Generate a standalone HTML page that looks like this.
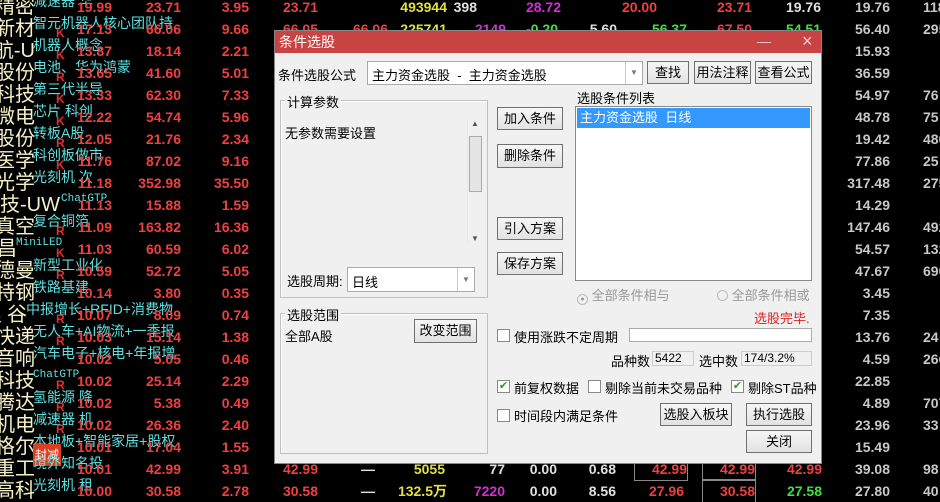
<!DOCTYPE html>
<html><head><meta charset="utf-8"><style>
*{margin:0;padding:0;box-sizing:border-box}
body{width:940px;height:497px;background:#000;position:relative;overflow:hidden;font-family:"Liberation Sans","Noto Sans CJK SC",sans-serif}
.r{position:absolute;left:0;width:940px;height:22px}
.r span{position:absolute;top:0;line-height:22px;font-size:14px;font-weight:bold;text-align:right;white-space:nowrap}
.r .nm{left:-40px;width:75px;font-size:20px;font-weight:normal;color:#f4f0c8;text-align:right}
.r .cp{left:33px;top:-6px;font-size:14px;font-weight:normal;color:#5ee0e0;text-align:left}
.r .k{left:56px;top:4px;font-size:12px;color:#e03030;text-align:left}
.c1{left:52px;width:60px;color:#f04040}
.c2{left:120px;width:61px;color:#f04040}
.c3{left:190px;width:59px;color:#f04040}
.g1{left:800px;width:90px;color:#c8c8c8}
.g2{left:923px;width:60px;color:#c8c8c8;text-align:left!important}
.x{color:#f04040}.y{color:#e0e040}.w{color:#e0e0e0}.m{color:#d030d0}.gr{color:#40e040}
.bx{outline:1px solid #888;outline-offset:0}
#dlg{position:absolute;left:274px;top:30px;width:548px;height:434px;background:#f0f0f0;border:1px solid #888;font-size:13px;color:#000}
#tb{position:absolute;left:0;top:0;width:546px;height:22px;background:#c94343;color:#fff;font-size:14px;line-height:22px;padding-left:4px}
.a{position:absolute;white-space:nowrap}
.btn{position:absolute;background:linear-gradient(#f6f6f6,#e2e2e2);border:1px solid #707070;text-align:center;font-size:13px;line-height:21px}
.inp{position:absolute;background:#fff;border:1px solid #aaa}
.grp{position:absolute;border:1px solid #c0c0c0;box-shadow:inset 1px 1px 0 #fff}
.gl{position:absolute;background:#f0f0f0;padding:0 2px;font-size:13px}
.cb{position:absolute;width:13px;height:13px;background:#fff;border:1px solid #888;font-size:11px;line-height:11px;color:#2a9a2a;text-align:center}
.dd{position:absolute;top:0;right:0;bottom:0;width:17px;border-left:1px solid #ccc;color:#777;font-size:8px;text-align:center}
</style></head><body>

<div class="r" style="top:-4px"><span class="nm">稳精密</span><span class="cp">减速器 华</span><span class="c1">19.99</span><span class="c2">23.71</span><span class="c3">3.95</span><span class="x" style="left:258px;width:60px">23.71</span><span class="y" style="left:380px;width:67px">493944</span><span class="w" style="left:440px;width:37px">398</span><span class="m" style="left:510px;width:51px">28.72</span><span class="x" style="left:600px;width:57px">20.00</span><span class="x" style="left:700px;width:52px">23.71</span><span class="w" style="left:770px;width:51px">19.76</span><span class="g1">19.76</span><span class="g2">118</span></div>
<div class="r" style="top:18px"><span class="nm">东新材</span><span class="cp">智元机器人核心团队持</span><span class="k">K</span><span class="c1">17.13</span><span class="c2">66.06</span><span class="c3">9.66</span><span class="x" style="left:258px;width:60px">66.05</span><span class="x" style="left:330px;width:58px">66.06</span><span class="y" style="left:380px;width:67px">225741</span><span class="m" style="left:460px;width:46px">2149</span><span class="gr" style="left:500px;width:58px">-0.20</span><span class="w" style="left:570px;width:47px">5.60</span><span class="gr" style="left:630px;width:57px">56.37</span><span class="x" style="left:700px;width:52px">67.50</span><span class="gr" style="left:770px;width:51px">54.51</span><span class="g1">56.40</span><span class="g2">295</span></div>
<div class="r" style="top:40px"><span class="nm">中航-U</span><span class="cp">机器人概念</span><span class="k">K</span><span class="c1">13.87</span><span class="c2">18.14</span><span class="c3">2.21</span><span class="g1">15.93</span></div>
<div class="r" style="top:62px"><span class="nm">科股份</span><span class="cp">电池、华为鸿蒙</span><span class="k">R</span><span class="c1">13.65</span><span class="c2">41.60</span><span class="c3">5.01</span><span class="g1">36.59</span></div>
<div class="r" style="top:84px"><span class="nm">海科技</span><span class="cp">第三代半导</span><span class="k">K</span><span class="c1">13.33</span><span class="c2">62.30</span><span class="c3">7.33</span><span class="g1">54.97</span><span class="g2">76</span></div>
<div class="r" style="top:106px"><span class="nm">敏微电</span><span class="cp">芯片 科创</span><span class="k">K</span><span class="c1">12.22</span><span class="c2">54.74</span><span class="c3">5.96</span><span class="g1">48.78</span><span class="g2">75</span></div>
<div class="r" style="top:128px"><span class="nm">藏股份</span><span class="cp">转板A股</span><span class="k">R</span><span class="c1">12.05</span><span class="c2">21.76</span><span class="c3">2.34</span><span class="g1">19.42</span><span class="g2">480</span></div>
<div class="r" style="top:150px"><span class="nm">康医学</span><span class="cp">科创板做市</span><span class="k">K</span><span class="c1">11.76</span><span class="c2">87.02</span><span class="c3">9.16</span><span class="g1">77.86</span><span class="g2">25</span></div>
<div class="r" style="top:172px"><span class="nm">茂光学</span><span class="cp">光刻机 次</span><span class="c1">11.18</span><span class="c2">352.98</span><span class="c3">35.50</span><span class="g1">317.48</span><span class="g2">275</span></div>
<div class="r" style="top:194px"><span class="nm" style="width:100px">鼎科技-UW</span><span class="cp" style="left:61px;font-size:11px;font-family:'Liberation Mono',monospace">ChatGTP</span><span class="c1">11.13</span><span class="c2">15.88</span><span class="c3">1.59</span><span class="g1">14.29</span></div>
<div class="r" style="top:216px"><span class="nm">汇真空</span><span class="cp">复合铜箔</span><span class="k">R</span><span class="c1">11.09</span><span class="c2">163.82</span><span class="c3">16.36</span><span class="g1">147.46</span><span class="g2">492</span></div>
<div class="r" style="top:238px"><span class="nm" style="width:57px">佳昌</span><span class="cp" style="left:16px;font-size:11px;font-family:'Liberation Mono',monospace">MiniLED</span><span class="k">K</span><span class="c1">11.03</span><span class="c2">60.59</span><span class="c3">6.02</span><span class="g1">54.57</span><span class="g2">132</span></div>
<div class="r" style="top:260px"><span class="nm">泰德曼</span><span class="cp">新型工业化</span><span class="k">R</span><span class="c1">10.59</span><span class="c2">52.72</span><span class="c3">5.05</span><span class="g1">47.67</span><span class="g2">690</span></div>
<div class="r" style="top:282px"><span class="nm">宁特钢</span><span class="cp">铁路基建</span><span class="c1">10.14</span><span class="c2">3.80</span><span class="c3">0.35</span><span class="g1">3.45</span></div>
<div class="r" style="top:304px"><span class="nm" style="width:67px">理 谷</span><span class="cp" style="left:26px">中报增长+RFID+消费物</span><span class="k">R</span><span class="c1">10.07</span><span class="c2">8.09</span><span class="c3">0.74</span><span class="g1">7.35</span></div>
<div class="r" style="top:326px"><span class="nm">通快递</span><span class="cp">无人车+AI物流+一季报</span><span class="k">R</span><span class="c1">10.03</span><span class="c2">15.14</span><span class="c3">1.38</span><span class="g1">13.76</span><span class="g2">24</span></div>
<div class="r" style="top:348px"><span class="nm">上音响</span><span class="cp">汽车电子+核电+年报增</span><span class="c1">10.02</span><span class="c2">5.05</span><span class="c3">0.46</span><span class="g1">4.59</span><span class="g2">2663</span></div>
<div class="r" style="top:370px"><span class="nm">江科技</span><span class="cp" style="font-size:11px;font-family:'Liberation Mono',monospace">ChatGTP</span><span class="k">R</span><span class="c1">10.02</span><span class="c2">25.14</span><span class="c3">2.29</span><span class="g1">22.85</span></div>
<div class="r" style="top:392px"><span class="nm">润腾达</span><span class="cp">氢能源 降</span><span class="k">R</span><span class="c1">10.02</span><span class="c2">5.38</span><span class="c3">0.49</span><span class="g1">4.89</span><span class="g2">707</span></div>
<div class="r" style="top:414px"><span class="nm">华机电</span><span class="cp">减速器 机</span><span class="k">R</span><span class="c1">10.02</span><span class="c2">26.36</span><span class="c3">2.40</span><span class="g1">23.96</span><span class="g2">33</span></div>
<div class="r" style="top:436px"><span class="nm">浩格尔</span><span class="cp">本地板+智能家居+股权</span><span class="k" style="left:33px;top:8px;background:#d84020;color:#fff;padding:0 2px;font-weight:normal">封减</span><span class="c1">10.01</span><span class="c2">17.04</span><span class="c3">1.55</span><span class="g1">15.49</span></div>
<div class="r" style="top:458px"><span class="nm">一重工</span><span class="cp">境外知名投</span><span class="c1">10.01</span><span class="c2">42.99</span><span class="c3">3.91</span><span class="x" style="left:258px;width:60px">42.99</span><span class="w" style="left:355px;width:20px">—</span><span class="y" style="left:380px;width:65px">5055</span><span class="w" style="left:460px;width:45px">77</span><span class="w" style="left:500px;width:57px">0.00</span><span class="w" style="left:570px;width:46px">0.68</span><span class="x bx" style="left:635px;width:52px">42.99</span><span class="x bx" style="left:703px;width:52px">42.99</span><span class="x" style="left:770px;width:52px">42.99</span><span class="g1">39.08</span><span class="g2">98</span></div>
<div class="r" style="top:480px"><span class="nm">宇高科</span><span class="cp">光刻机 租</span><span class="c1">10.00</span><span class="c2">30.58</span><span class="c3">2.78</span><span class="x" style="left:258px;width:60px">30.58</span><span class="w" style="left:355px;width:20px">—</span><span class="y" style="left:380px;width:67px">132.5万</span><span class="m" style="left:460px;width:45px">7220</span><span class="w" style="left:500px;width:57px">0.00</span><span class="w" style="left:570px;width:46px">8.56</span><span class="x" style="left:630px;width:54px">27.96</span><span class="x bx" style="left:703px;width:52px">30.58</span><span class="gr" style="left:770px;width:52px">27.58</span><span class="g1">27.80</span><span class="g2">40</span></div>

<div id="dlg">
 <div id="tb">条件选股<span style="position:absolute;left:482px;top:-1px;color:#f4c8c8">—</span><span style="position:absolute;left:527px;top:-1px;font-size:18px;color:#f4d0d0">×</span></div>
 <div class="a" style="left:3px;top:34px">条件选股公式</div>
 <div class="inp" style="left:92px;top:30px;width:276px;height:24px"><span class="a" style="left:4px;top:3px">主力资金选股 &nbsp;- &nbsp;主力资金选股</span><div class="dd" style="line-height:22px">▼</div></div>
 <div class="btn" style="left:372px;top:30px;width:42px;height:23px">查找</div>
 <div class="btn" style="left:419px;top:30px;width:57px;height:23px">用法注释</div>
 <div class="btn" style="left:480px;top:30px;width:57px;height:23px">查看公式</div>

 <div class="grp" style="left:5px;top:69px;width:208px;height:198px"></div>
 <div class="gl" style="left:10px;top:61px">计算参数</div>
 <div class="a" style="left:10px;top:92px">无参数需要设置</div>
 <div class="a" style="left:192px;top:88px;width:15px;height:124px;background:#f0f0f0;border-left:1px solid #e6e6e6">
  <div style="position:absolute;left:1px;top:17px;width:13px;height:56px;background:#e4e4e4;border:1px solid #aaa"></div>
  <div style="position:absolute;left:3px;top:0;font-size:8px;color:#555">▲</div>
  <div style="position:absolute;left:3px;bottom:0;font-size:8px;color:#555">▼</div>
 </div>
 <div class="a" style="left:12px;top:240px">选股周期:</div>
 <div class="inp" style="left:72px;top:236px;width:128px;height:25px"><span class="a" style="left:4px;top:4px">日线</span><div class="dd" style="line-height:23px">▼</div></div>

 <div class="btn" style="left:222px;top:76px;width:66px;height:23px">加入条件</div>
 <div class="btn" style="left:222px;top:113px;width:66px;height:24px">删除条件</div>
 <div class="btn" style="left:222px;top:186px;width:66px;height:23px">引入方案</div>
 <div class="btn" style="left:222px;top:221px;width:66px;height:23px">保存方案</div>

 <div class="a" style="left:302px;top:57px">选股条件列表</div>
 <div class="inp" style="left:300px;top:75px;width:237px;height:175px;border-color:#888"><div style="position:absolute;left:1px;top:1px;width:233px;height:20px;background:#3399ff;color:#fff;line-height:20px;padding-left:3px">主力资金选股 &nbsp;日线</div></div>
 <div class="a" style="left:302px;top:254px;color:#999"><span style="display:inline-block;width:11px;height:11px;border:1px solid #bbb;border-radius:50%;vertical-align:-1px;text-align:center;font-size:7px;line-height:9px">●</span> 全部条件相与</div>
 <div class="a" style="left:442px;top:254px;color:#999"><span style="display:inline-block;width:11px;height:11px;border:1px solid #bbb;border-radius:50%;vertical-align:-1px"></span> 全部条件相或</div>

 <div class="grp" style="left:5px;top:282px;width:208px;height:141px"></div>
 <div class="gl" style="left:10px;top:274px">选股范围</div>
 <div class="a" style="left:10px;top:295px">全部A股</div>
 <div class="btn" style="left:139px;top:288px;width:63px;height:24px">改变范围</div>

 <div class="a" style="left:479px;top:277px;color:#e02020">选股完毕.</div>
 <div class="cb" style="left:222px;top:298px"></div><div class="a" style="left:239px;top:296px">使用涨跌不定周期</div>
 <div class="inp" style="left:354px;top:297px;width:183px;height:14px"></div>
 <div class="a" style="left:336px;top:320px">品种数</div>
 <div class="inp" style="left:377px;top:320px;width:42px;height:15px;background:#f0f0f0;border-color:#ccc;font-size:12px;line-height:13px;padding-left:2px">5422</div>
 <div class="a" style="left:424px;top:320px">选中数</div>
 <div class="inp" style="left:466px;top:320px;width:71px;height:15px;background:#f0f0f0;border-color:#ccc;font-size:12px;line-height:13px;padding-left:2px">174/3.2%</div>
 <div class="cb" style="left:222px;top:349px">✔</div><div class="a" style="left:239px;top:347px">前复权数据</div>
 <div class="cb" style="left:313px;top:349px"></div><div class="a" style="left:330px;top:347px">剔除当前未交易品种</div>
 <div class="cb" style="left:456px;top:349px">✔</div><div class="a" style="left:473px;top:347px">剔除ST品种</div>
 <div class="cb" style="left:222px;top:378px"></div><div class="a" style="left:239px;top:375px">时间段内满足条件</div>
 <div class="btn" style="left:385px;top:372px;width:72px;height:23px">选股入板块</div>
 <div class="btn" style="left:471px;top:372px;width:66px;height:23px">执行选股</div>
 <div class="btn" style="left:471px;top:399px;width:66px;height:23px">关闭</div>
</div>
</body></html>
